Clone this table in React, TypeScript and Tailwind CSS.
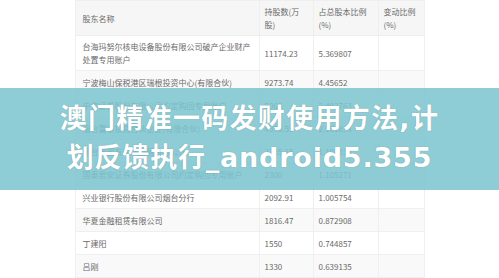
import React from "react";

type Row = { name: React.ReactNode; shares: string; ratio: string; change: string };

const rows: Row[] = [
  { name: <>台海玛努尔核电设备股份有限公司破产企业财产<br />处置专用账户</>, shares: "11174.23", ratio: "5.369807", change: "" },
  { name: "宁波梅山保税港区瑞根投资中心(有限合伙)", shares: "9273.74", ratio: "4.45652", change: "" },
  { name: "中信证券股份有限公司约定购回专用账户", shares: "5000", ratio: "2.402763", change: "" },
  { name: "烟台富泰投资合伙企业(有限合伙)", shares: "4375.59", ratio: "2.101834", change: "" },
  { name: "烟台市国有资产经营有限公司", shares: "2305.15", ratio: "1.107839", change: "" },
  { name: "国泰君安证券股份有限公司约定购回专用账户", shares: "2300", ratio: "1.105271", change: "" },
  { name: "兴业银行股份有限公司烟台分行", shares: "2092.91", ratio: "1.005754", change: "" },
  { name: "华夏金融租赁有限公司", shares: "1816.47", ratio: "0.872908", change: "" },
  { name: "丁建阳", shares: "1550", ratio: "0.744857", change: "" },
  { name: "吕刚", shares: "1330", ratio: "0.639135", change: "" },
];

export default function App() {
  return (
    <div
      className="relative w-[499px] h-[278px] overflow-hidden bg-white"
      style={{ fontFamily: '"Noto Sans CJK SC", "Noto Sans", sans-serif' }}
    >
      <table className="mx-auto w-[349px] table-fixed border-collapse text-[8px] leading-[13px] text-[#6a6a6a]">
        <colgroup>
          <col className="w-[184px]" />
          <col className="w-[54px]" />
          <col className="w-[65px]" />
          <col className="w-[46px]" />
        </colgroup>
        <thead>
          <tr className="h-[35px] bg-[#f6f6f6]">
            <th className="border border-[#efefef] pl-[7px] text-left font-normal align-middle">股东名称</th>
            <th className="border border-[#efefef] pl-[5px] text-left font-normal align-middle">持股数(万<br />股)</th>
            <th className="border border-[#efefef] pl-[5px] text-left font-normal align-middle">占总股本比例<br />(%)</th>
            <th className="border border-[#efefef] pl-[5px] text-left font-normal align-middle">变动比例<br />(%)</th>
          </tr>
        </thead>
        <tbody>
          {rows.map((r, i) => (
            <tr key={i} className={`${i === 0 ? "h-[35px]" : "h-[23px]"} ${i % 2 === 1 ? "bg-[#f9f9f9]" : "bg-white"}`}>
              <td className="border border-[#efefef] pl-[7px] align-middle whitespace-nowrap overflow-hidden">{r.name}</td>
              <td className="border border-[#efefef] pl-[5px] align-middle">{r.shares}</td>
              <td className="border border-[#efefef] pl-[5px] align-middle">{r.ratio}</td>
              <td className="border border-[#efefef] pl-[5px] align-middle">{r.change}</td>
            </tr>
          ))}
        </tbody>
      </table>

      <div className="absolute left-0 top-[88px] flex h-[102px] w-[499px] items-center justify-center bg-[rgba(124,197,207,0.86)] pb-[2px]">
        <p
          className="w-[460px] text-center text-[27px] font-bold leading-[37px] tracking-[1.3px] text-white [text-shadow:0_0_1px_rgba(0,0,0,0.3)]"
          style={{ fontFamily: '"DejaVu Sans", "Noto Sans CJK SC", sans-serif' }}
        >
          <span className="block">澳门精准一码发财使用方法,计</span>
          <span className="block tracking-[0.8px] mt-[2px]">划反馈执行_android5.355</span>
        </p>
      </div>
    </div>
  );
}
